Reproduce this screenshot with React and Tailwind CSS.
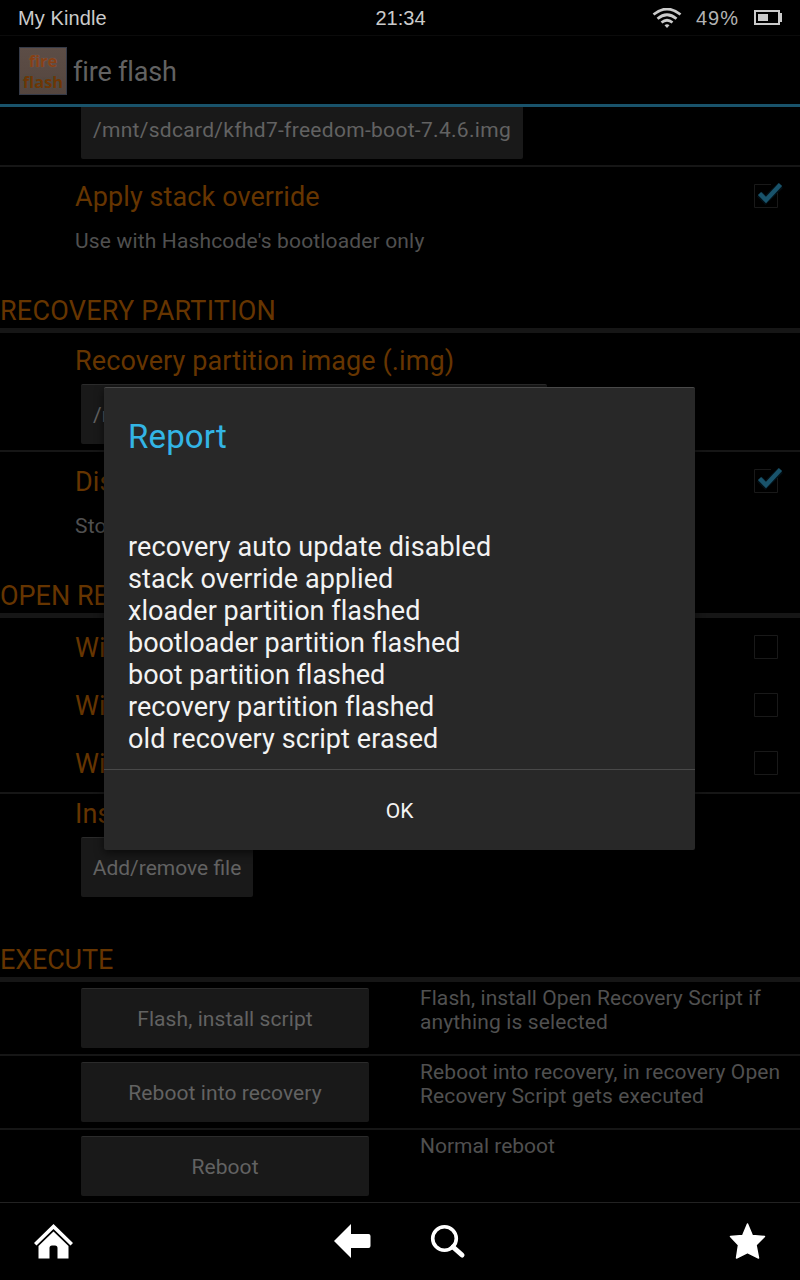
const TITLE = "whitespace-nowrap text-[27px] leading-8 tracking-[0.1px] text-[#663500]";

function Section({ children, className }) {
  return (
    <div className={`flex shrink-0 flex-col justify-end border-b-5 border-[#161616] pb-px ${className}`}>
      <h2 className="text-[27px] leading-8 text-[#663500]">{children}</h2>
    </div>
  );
}

function Button({ children, className = "" }) {
  return (
    <button className={`ml-[81px] flex h-[60px] shrink-0 items-center justify-center rounded-xs border-t border-[#2b2b2b] bg-[#191919] pt-[3px] text-[21px] whitespace-nowrap text-[#626262] ${className}`}>
      {children}
    </button>
  );
}

function Check({ checked = false }) {
  return (
    <svg className="h-9 w-9 shrink-0" viewBox="0 0 36 36" fill="none">
      {checked ? (
        <>
          <path d="M21 6.500H4.500V29.500H27.500V15" stroke="#191919" />
          <path d="M9.500 16l6 6L30.500 7.500" stroke="#0a3344" strokeWidth="7" opacity=".3" />
          <path d="M9.500 15.500l6.500 6.500L30.500 6.500" stroke="#19536b" strokeWidth="4.500" />
        </>
      ) : (
        <path d="M4.500 6.500H27.500V29.500H4.500Z" stroke="#191919" />
      )}
    </svg>
  );
}

function CheckRow({ title, sub, checked, className }) {
  return (
    <div className={`flex shrink-0 justify-between pt-[11px] pr-[14px] pl-[75px] ${className}`}>
      <div className="pt-[3px]">
        <div className={TITLE}>{title}</div>
        {sub && <div className="mt-4 text-[21px] leading-6 tracking-[0.16px] whitespace-nowrap text-[#505050]">{sub}</div>}
      </div>
      <Check checked={checked} />
    </div>
  );
}

function ExecRow({ label, lines, last = false }) {
  return (
    <div className={`flex shrink-0 pt-1.5 ${last ? "h-[72px]" : "h-[74px] border-b-2 border-[#161616]"}`}>
      <Button className="w-[288px] tracking-[0.08px]">{label}</Button>
      <div className="-mt-0.5 ml-[51px] text-[21px] leading-6 whitespace-nowrap text-[#505050]">
        {lines.map(([text, tracking]) => <p key={text} className={tracking}>{text}</p>)}
      </div>
    </div>
  );
}

const REPORT = [
  ["recovery auto update disabled", "tracking-[0.1px]"],
  ["stack override applied", "tracking-[0.1px]"],
  ["xloader partition flashed", "tracking-[0.02px]"],
  ["bootloader partition flashed", "tracking-[-0.03px]"],
  ["boot partition flashed", "tracking-[-0.03px]"],
  ["recovery partition flashed", "tracking-[0.05px]"],
  ["old recovery script erased", "tracking-[0.09px]"],
];

export default function App() {
  return (
    <div className="relative flex h-[1280px] w-[800px] flex-col overflow-hidden bg-black font-['Roboto',sans-serif]">
      <header className="grid h-9 shrink-0 grid-cols-3 items-center border-b border-[#0b0b0b] pr-[18px] pl-[18px] font-['Liberation_Sans',sans-serif] text-[20px] text-[#cbcbcb]">
        <span className="tracking-[0.1px]">My Kindle</span>
        <span className="pl-px text-center">21:34</span>
        <div className="flex items-center justify-end">
          <svg className="h-5 w-[30px]" viewBox="0 0 30 20" fill="none" stroke="#cbcbcb" strokeWidth="2.700">
            <path d="M1.500 6.500Q15-4.500 28.500 6.500M5.500 10.700Q15 2.800 24.500 10.700M9.500 14.500Q15 10 20.500 14.500" />
            <path d="M12.500 17.300Q15 15.200 17.500 17.300L15 20Z" fill="#cbcbcb" stroke="none" />
          </svg>
          <span className="ml-[14px] tracking-[1px] text-[#b3b3b3]">49%</span>
          <svg className="ml-[15px] h-4 w-7" viewBox="0 0 28 16" fill="#cbcbcb">
            <path d="M0 0H26V3H28V12H26V15H0ZM2 2V13H24V2Z" fillRule="evenodd" />
            <path d="M4 4H14V11H4Z" />
          </svg>
        </div>
      </header>

      <div className="flex h-[71px] shrink-0 items-center border-b-3 border-[#19536b] pt-0.5 pl-[19px]">
        <div className="flex h-12 w-12 flex-col items-center justify-center border border-[#363b48] bg-linear-to-b from-[#5c4d46] to-[#55463f] font-['Open_Sans',sans-serif] text-[16.5px] leading-[21px] font-bold">
          <span className="text-[#853f14] [text-shadow:0_0_1px_#8a756b]">fire</span>
          <span className="text-[#6e3604] [text-shadow:0_0_2px_#3f5350]">flash</span>
        </div>
        <h1 className="mt-0.5 ml-1.5 text-[27px] leading-8 tracking-[-0.15px] text-[#626262]">fire flash</h1>
      </div>

      <main className="flex h-[1095px] shrink-0 flex-col">
        <div className="flex h-[60px] shrink-0 border-b-2 border-[#161616]">
          <div className="ml-[81px] flex h-[52px] w-[442px] justify-center rounded-b-xs bg-[#191919] pt-[11px] text-[21px] leading-6 tracking-[0.3px] whitespace-nowrap text-[#626262]">
            /mnt/sdcard/kfhd7-freedom-boot-7.4.6.img
          </div>
        </div>
        <CheckRow className="h-[119px]" title="Apply stack override" sub="Use with Hashcode's bootloader only" checked />
        <Section className="h-[47px] tracking-[0.22px]">RECOVERY PARTITION</Section>
        <div className="flex h-[119px] shrink-0 flex-col items-start border-b-2 border-[#161616] pt-3">
          <div className={`ml-[75px] h-[39px] ${TITLE}`}>Recovery partition image (.img)</div>
          <Button className="w-[466px] pl-3 !justify-start">/m</Button>
        </div>
        <CheckRow className="h-[119px]" title="Dis" sub="Sto" checked />
        <Section className="h-[47px]">OPEN RE</Section>
        <CheckRow className="h-[58px]" title="Wi" />
        <CheckRow className="h-[58px]" title="Wi" />
        <CheckRow className="h-[58px]" title="Wi" />
        <div className="flex h-[138px] shrink-0 flex-col items-start border-t-2 border-[#161616] pt-1">
          <div className={`ml-[75px] h-[39px] ${TITLE}`}>Ins</div>
          <Button className="w-[172px]">Add/remove file</Button>
        </div>
        <Section className="h-[52px] tracking-[-0.15px]">EXECUTE</Section>
        <ExecRow
          label="Flash, install script"
          lines={[
            ["Flash, install Open Recovery Script if", "tracking-[0.08px]"],
            ["anything is selected", "tracking-[0.13px]"],
          ]}
        />
        <ExecRow
          label="Reboot into recovery"
          lines={[
            ["Reboot into recovery, in recovery Open", "tracking-[0.13px]"],
            ["Recovery Script gets executed", "tracking-[0.11px]"],
          ]}
        />
        <ExecRow label="Reboot" lines={[["Normal reboot", "tracking-normal"]]} last />
      </main>

      <nav className="flex h-[78px] shrink-0 border-t border-[#222] text-white">
        <svg className="mt-[21px] ml-[34px] h-9 w-[39px]" viewBox="0 0 39 36" fill="currentColor">
          <path d="M19.500 0L39 19L36.500 21.500L19.500 5L2.500 21.500L0 19Z" />
          <path d="M19.500 7.500L34.500 22V34.500H23.500V24Q23.500 21.500 21 21.500H18Q15.500 21.500 15.500 24V34.500H4.500V22Z" />
        </svg>
        <svg className="mt-[20px] ml-[261px] h-9 w-9.5" viewBox="0 0 38 36" fill="currentColor">
          <path d="M0 18L17 1V11H34.500Q36.500 11 36.500 13V23Q36.500 25 34.500 25H17V35Z" />
        </svg>
        <svg className="mt-[21px] ml-[58px] h-9 w-9" viewBox="0 0 36 36" fill="none" stroke="currentColor">
          <circle cx="14.500" cy="14.500" r="11.800" strokeWidth="3.600" />
          <path d="M23 23L32 31" strokeWidth="5" strokeLinecap="round" />
        </svg>
        <svg className="mt-[19px] ml-[263px] h-[38px] w-[37px]" viewBox="0 0 37 38" fill="currentColor" stroke="currentColor" strokeWidth="1.500" strokeLinejoin="round">
          <path d="M18.500 2L23.300 13.500L35.500 14.500L27 23L29.500 36L18.500 30.500L7.500 36L9.500 23L1.500 14.500L13.700 13.500Z" />
        </svg>
      </nav>

      <div role="dialog" className="absolute top-[387px] left-[104px] flex h-[463px] w-[591px] flex-col rounded-xs border-t border-[#494949] bg-[#282828] shadow-[0_3px_10px_rgba(0,0,0,0.6)]">
        <h2 className="h-[143px] pt-[29px] pl-6 text-[33px] leading-10 tracking-[0.15px] text-[#33b5e5]">Report</h2>
        <div className="h-[238px] pl-6 text-[27px] leading-8 text-[#f3f3f3]">
          {REPORT.map(([line, tracking]) => <p key={line} className={tracking}>{line}</p>)}
        </div>
        <button className="flex h-[81px] items-center justify-center border-t border-[#494949] pt-[3px] text-[21px] text-[#f3f3f3]">OK</button>
      </div>
    </div>
  );
}
